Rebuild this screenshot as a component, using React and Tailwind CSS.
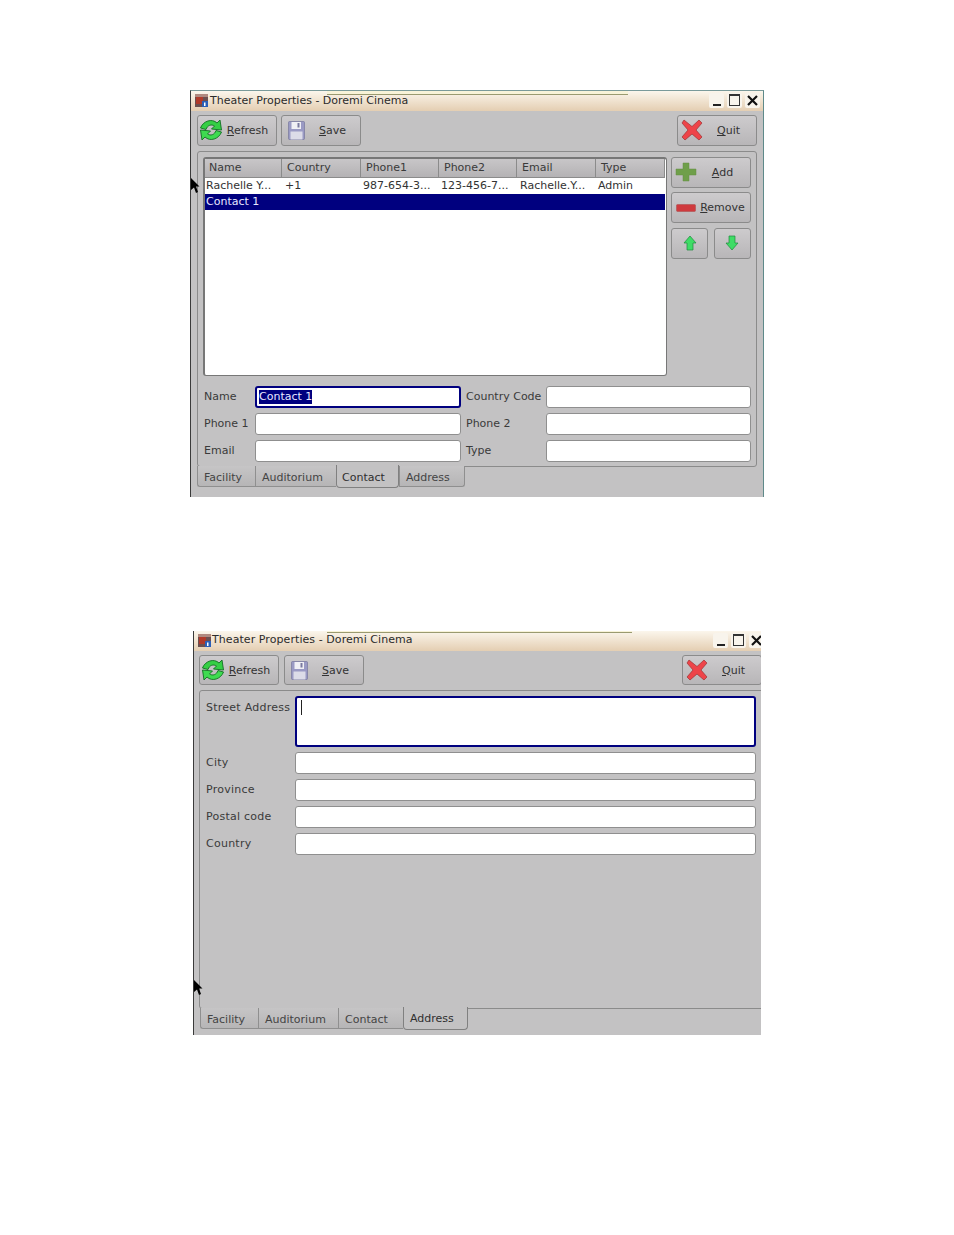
import React from "react";

const Refresh = () => (
  <svg width="24" height="24" viewBox="0 0 24 24" className="shrink-0 -mt-[1px]">
    <path d="M1.500 10 C4 3 13 0 18 5 L21 2 L22.500 12 L12.500 11 L15.500 8 C12.500 6 8.500 7 7 11.500 Z" fill="#35cf45" stroke="#116f22" strokeWidth="0.900" strokeLinejoin="round" />
    <path d="M22.500 14 C20 21 11 24 6 19 L3 22 L1.500 12 L11.500 13 L8.500 16 C11.500 18 15.500 17 17 12.500 Z" fill="#3edb50" stroke="#116f22" strokeWidth="0.900" strokeLinejoin="round" />
  </svg>
);
const Floppy = () => (
  <svg width="17" height="19" viewBox="0 0 17 19" className="shrink-0">
    <rect x="0.500" y="0.500" width="16" height="18" rx="1" fill="#9a9ac4" stroke="#77779c" strokeWidth="0.700" />
    <rect x="3.500" y="1" width="9.500" height="7" fill="#f0f0f5" />
    <rect x="9.500" y="2" width="2" height="4.500" fill="#7a7aa0" />
    <rect x="2.500" y="10.500" width="12" height="8" fill="#dcdce8" />
  </svg>
);
const RedX = () => (
  <svg width="22" height="22" viewBox="0 0 22 22" className="shrink-0 -mt-[1px]">
    <path d="M3 1 L11 7.500 L18 1 L21 4 L15 11 L21 18 L18 21 L11 15 L4 21 L1 18 L7 11 L1 4 Z" fill="#ee4449" stroke="#9c3434" strokeWidth="0.700" strokeLinejoin="round" />
  </svg>
);
const Plus = () => (
  <svg width="22" height="20" viewBox="0 0 22 20" className="shrink-0 -mt-[2px]">
    <path d="M8 1 H14 V7 H21 V13 H14 V19 H8 V13 H1 V7 H8 Z" fill="#6f9f4a" stroke="#648f44" strokeWidth="0.500" strokeLinejoin="round" />
  </svg>
);
const Minus = () => (
  <svg width="20" height="8" viewBox="0 0 20 8" className="shrink-0">
    <rect x="0.500" y="0.500" width="19" height="7" rx="1" fill="#cf3a3e" stroke="#a84a4a" strokeWidth="0.500" />
  </svg>
);
const Up = () => (
  <svg width="14" height="16" viewBox="0 0 14 16" className="-mt-[2px]">
    <path d="M7 1 L13 8 H10 V15 H4 V8 H1 Z" fill="#3fdc66" stroke="#1e8a3c" strokeWidth="0.700" strokeLinejoin="round" />
  </svg>
);
const Down = () => (
  <svg width="14" height="16" viewBox="0 0 14 16" className="-mt-[2px] -ml-[1px]">
    <path d="M7 15 L13 8 H10 V1 H4 V8 H1 Z" fill="#3fdc66" stroke="#1e8a3c" strokeWidth="0.700" strokeLinejoin="round" />
  </svg>
);
const AppIcon = () => (
  <svg width="13" height="13" viewBox="0 0 13 13" className="shrink-0">
    <rect width="13" height="13" fill="#6b5050" />
    <rect x="0" y="0" width="13" height="3" fill="#b08a80" />
    <rect x="1" y="3" width="7" height="7" fill="#b03a2a" />
    <rect x="7" y="7" width="6" height="6" fill="#2a5fb8" />
    <rect x="9" y="8.500" width="1.500" height="3.500" fill="#fff" />
  </svg>
);
const Cursor = ({ className }) => (
  <svg width="9" height="15" viewBox="0 0 9 15" className={className}>
    <path d="M0 0 L8.500 8.500 L5 8.500 L7 14 L5 15 L3 9.500 L0 12 Z" fill="#000" />
  </svg>
);

const Btn = ({ icon, u, rest, className, shiftIcon }) => (
  <div className={`flex items-center border border-[#8b8b8b] rounded-[3px] bg-gradient-to-b from-[#cdcbcd] to-[#b8b6b8] text-[#333] ${className}`}>
    <span className={`w-[28px] flex justify-center shrink-0 ${shiftIcon || ""}`}>{icon}</span>
    <span className="flex-1 text-center pr-[5px]">
      <span className="underline">{u}</span>
      {rest}
    </span>
  </div>
);

const Title = ({ pr, textClass }) => (
  <div className={`h-[20px] flex items-center bg-gradient-to-b from-[#fbf6ec] to-[#e4ceb2] pl-[4px] gap-[2px] pb-[2px] ${pr}`}>
    <AppIcon />
    <span className={`text-[#2b2b2b] whitespace-nowrap ${textClass || ""}`}>Theater Properties - Doremi Cinema</span>
    <div className="ml-auto flex gap-[3px] shrink-0">
      {["min", "max", "close"].map((k) => (
        <div key={k} className="w-[15px] h-[15px] bg-[#f8f4ec] rounded-[2px] relative flex items-center justify-center">
          {k === "min" && <div className="w-[8px] h-[2px] bg-[#222] mt-[9px]" />}
          {k === "max" && <div className="w-[11px] h-[12px] border border-[#333] border-t-2" />}
          {k === "close" && (
            <svg width="11" height="11" viewBox="0 0 11 11">
              <path d="M1 1 L10 10 M10 1 L1 10" stroke="#111" strokeWidth="2.200" />
            </svg>
          )}
        </div>
      ))}
    </div>
  </div>
);

const Tab = ({ children, active, className }) => (
  <div
    className={
      active
        ? `flex items-center pl-[6px] bg-[#c3c2c3] border border-t-0 border-[#808080] rounded-b-[4px] text-[#2f2f2f] relative z-10 ${className}`
        : `flex items-center pl-[6px] pt-[2px] bg-gradient-to-b from-[#c6c5c6] to-[#b6b5b6] border border-t-0 border-r-0 border-[#8f8f8f] last:border-r text-[#444] ${className}`
    }
  >
    {children}
  </div>
);

const Input = ({ className, focus, children }) => (
  <div
    className={
      focus
        ? `bg-white border-2 border-[#00007f] rounded-[3px] flex items-center ${className}`
        : `bg-white border border-[#8f8f8f] rounded-[3px] ${className}`
    }
  >
    {children}
  </div>
);

const cols = ["Name", "Country", "Phone1", "Phone2", "Email", "Type"];
const row = [
  ["Rachelle Y...", "pl-[1px]"],
  ["+1", "pl-[3px]"],
  ["987-654-3...", "pl-[2px]"],
  ["123-456-7...", "pl-[2px]"],
  ["Rachelle.Y...", "pl-[3px]"],
  ["Admin", "pl-[2px]"],
];
const gridCols = "grid grid-cols-[77px_79px_78px_78px_79px_69px]";

const Field = ({ label, focus, children, labelW = "w-[51px]", inputW = "w-[206px]" }) => (
  <div className="flex items-center">
    <span className={`${labelW} shrink-0 whitespace-nowrap text-[#3a3a3a] pb-[2px]`}>{label}</span>
    <Input focus={focus} className={`${inputW} h-[22px]`}>{children}</Input>
  </div>
);

const Window1 = () => (
  <div className="relative ml-[190px] w-[574px] h-[407px] overflow-hidden bg-[#c3c2c3] border-l border-l-[#3a3a3a] border-r border-r-[#5f8a8a] border-t border-t-[#7a9a9a]">
    <div className="absolute left-[136px] top-0 w-[301px] h-[4px] bg-[#f8f3d8] border-b border-[#9a9a70] z-20" />
    <Cursor className="absolute left-0 top-[87px] z-30" />
    <Title pr="pr-[3px]" />
    <div className="flex px-[6px] pt-[4px] gap-[4px]">
      <Btn icon={<Refresh />} shiftIcon="-ml-[1px] -mr-[1px]" u="R" rest="efresh" className="w-[80px] h-[31px]" />
      <Btn icon={<Floppy />} u="S" rest="ave" className="w-[80px] h-[31px]" />
      <Btn icon={<RedX />} u="Q" rest="uit" className="w-[80px] h-[31px] ml-auto" />
    </div>
    <div className="mx-[6px] mt-[5px] w-[560px] h-[316px] border border-[#8b8b8b] rounded-[3px] pl-[5px] pr-[5px] pt-[5px]">
      <div className="flex gap-[4px]">
        <div className="w-[464px] h-[219px] bg-white border border-[#777] border-t-2 border-l-2 rounded-[3px] overflow-hidden pr-[1px]">
          <div className={`${gridCols} h-[19px] bg-gradient-to-b from-[#c8c6c8] to-[#b4b2b4] border-b border-[#8b8b8b]`}>
            {cols.map((c, i) => (
              <div key={c} className={`${i === 0 ? "pl-[4px]" : "pl-[5px]"} pb-[2px] flex items-center border-r border-[#8b8b8b] text-[#3a3a3a]`}>{c}</div>
            ))}
          </div>
          <div className={`${gridCols} h-[16px] text-[#333]`}>
            {row.map(([c, p]) => (
              <div key={c} className={`${p} pb-[2px] flex items-center whitespace-nowrap`}>{c}</div>
            ))}
          </div>
          <div className="h-[16px] bg-[#00007f] text-[#e8e8ff] pl-[1px] pb-[2px] flex items-center">Contact 1</div>
        </div>
        <div className="flex flex-col w-[80px]">
          <Btn icon={<Plus />} u="A" rest="dd" className="h-[31px]" />
          <div className="mt-[4px]">
            <Btn icon={<Minus />} u="R" rest="emove" className="h-[31px]" />
          </div>
          <div className="flex justify-between mt-[5px]">
            <div className="w-[37px] h-[31px] border border-[#8b8b8b] rounded-[3px] bg-gradient-to-b from-[#cdcbcd] to-[#b8b6b8] flex items-center justify-center"><Up /></div>
            <div className="w-[37px] h-[31px] border border-[#8b8b8b] rounded-[3px] bg-gradient-to-b from-[#cdcbcd] to-[#b8b6b8] flex items-center justify-center"><Down /></div>
          </div>
        </div>
      </div>
      <div className="grid grid-cols-[262px_285px] gap-y-[5px] mt-[10px] pl-[1px]">
        <Field label="Name" focus>
          <span className="bg-[#00007f] text-[#e8e8ff] ml-[2px] leading-[14px]">Contact 1</span>
        </Field>
        <Field label="Country Code" labelW="w-[80px]" inputW="w-[205px]" />
        <Field label="Phone 1" />
        <Field label="Phone 2" labelW="w-[80px]" inputW="w-[205px]" />
        <Field label="Email" />
        <Field label="Type" labelW="w-[80px]" inputW="w-[205px]" />
      </div>
    </div>
    <div className="flex ml-[6px] -mt-[1px] items-start">
      <Tab className="w-[58px] h-[21px] rounded-bl-[3px]">Facility</Tab>
      <Tab className="w-[81px] h-[21px]">Auditorium</Tab>
      <Tab active className="w-[63px] h-[23px] -mt-[1px] !pl-[5px] pt-[2px]">Contact</Tab>
      <Tab className="w-[66px] h-[21px] rounded-br-[3px]">Address</Tab>
    </div>
  </div>
);

const AddrRow = ({ label }) => (
  <div className="flex items-center h-[22px]">
    <span className="w-[89px] shrink-0 text-[#3a3a3a] pb-[1px] tracking-[0.25px]">{label}</span>
    <Input className="w-[461px] h-[22px]" />
  </div>
);

const Window2 = () => (
  <div className="relative ml-[193px] w-[568px] h-[404px] overflow-hidden bg-[#c3c2c3] border-l border-l-[#3a3a3a]">
    <div className="w-[575px]">
      <div className="absolute left-[133px] top-0 w-[305px] h-[2px] bg-[#f8f3d8] border-b border-[#9a9a70] z-20" />
      <Cursor className="absolute left-0 top-[349px] z-30" />
      <Title pr="pr-[5px]" textClass="tracking-[0.07px] -mt-[2px] -ml-[1px]" />
      <div className="flex pl-[5px] pr-[11px] pt-[4px] gap-[5px]">
        <Btn icon={<Refresh />} shiftIcon="-ml-[1px] -mr-[1px]" u="R" rest="efresh" className="w-[80px] h-[30px]" />
        <Btn icon={<Floppy />} u="S" rest="ave" className="w-[80px] h-[30px]" />
        <Btn icon={<RedX />} u="Q" rest="uit" className="w-[80px] h-[30px] ml-auto -mr-[4px]" />
      </div>
      <div className="ml-[5px] mt-[5px] w-[570px] h-[319px] border border-[#8b8b8b] rounded-[3px] pl-[6px] pt-[5px]">
        <div className="flex">
          <span className="w-[89px] shrink-0 text-[#3a3a3a] pt-[6px] tracking-[0.25px] whitespace-nowrap">Street Address</span>
          <Input focus className="w-[461px] h-[51px] !items-start">
            <div className="w-[1px] h-[15px] bg-[#222] ml-[4px] mt-[2px]" />
          </Input>
        </div>
        <div className="flex flex-col gap-[5px] mt-[5px]">
          <AddrRow label="City" />
          <AddrRow label="Province" />
          <AddrRow label="Postal code" />
          <AddrRow label="Country" />
        </div>
      </div>
      <div className="flex ml-[6px] -mt-[1px] items-start">
        <Tab className="w-[58px] h-[21px] rounded-bl-[3px]">Facility</Tab>
        <Tab className="w-[80px] h-[21px]">Auditorium</Tab>
        <Tab className="w-[65px] h-[21px]">Contact</Tab>
        <Tab active className="w-[65px] h-[23px] -mt-[1px]">Address</Tab>
      </div>
    </div>
  </div>
);

export default function App() {
  return (
    <div className="w-[954px] h-[1235px] bg-white pt-[90px] font-['DejaVu_Sans',sans-serif] text-[11px] leading-none overflow-hidden">
      <Window1 />
      <div className="h-[134px]" />
      <Window2 />
    </div>
  );
}
